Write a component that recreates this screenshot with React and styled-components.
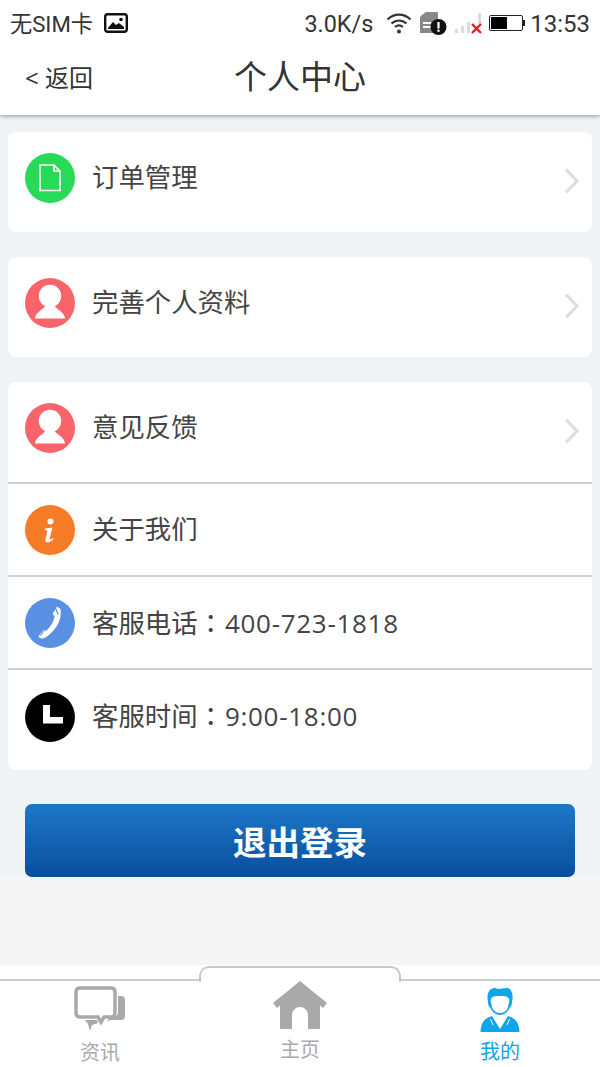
import React from 'react';
import styled, { createGlobalStyle } from 'styled-components';

const Global = createGlobalStyle`
  html, body { margin: 0; padding: 0; background: #f5f5f5; }
  * { box-sizing: border-box; }
  body { font-family: "Open Sans", "Noto Sans CJK SC", sans-serif; }
`;

const Page = styled.div`
  width: 600px;
  height: 1067px;
  display: flex;
  flex-direction: column;
  overflow: hidden;
  background: #f5f5f5;
`;

const Header = styled.header`
  height: 115px;
  background: #fff;
  box-shadow: 0 1px 4px rgba(0, 0, 0, 0.4);
  position: relative;
  z-index: 2;
  flex: none;
`;

const StatusBar = styled.div`
  height: 46px;
  padding: 0 10px;
  display: flex;
  align-items: center;
  color: #333;
  font-family: Roboto, "Noto Sans CJK SC", sans-serif;
  font-size: 24px;
`;

const StatusText = styled.span`
  line-height: 44px;
  padding-top: 2px;
  font-size: ${p => p.$size || 24}px;
  margin-left: ${p => p.$left || 0}px;
`;

const StatusIcon = styled.svg`
  flex: none;
  display: block;
  margin-left: ${p => p.$left || 0}px;
`;

const Spacer = styled.div`
  flex: 1;
`;

const NavBar = styled.div`
  height: 69px;
  display: grid;
  grid-template-columns: 1fr auto 1fr;
  align-items: center;
  padding: 0 25px 9px;
  color: #333;
`;

const Back = styled.span`
  font-size: 24px;
  line-height: 1;
  padding-top: 4px;
`;

const Title = styled.h1`
  margin: 0;
  font-size: 33px;
  font-weight: 400;
  line-height: 1;
`;

const Content = styled.main`
  height: 762px;
  flex: none;
  background: #eff3f5;
  padding: 17px 8px 0;
  display: flex;
  flex-direction: column;
  gap: 25px;
`;

const Card = styled.section`
  background: #fff;
  border-radius: 8px;
  display: flex;
  flex-direction: column;
  overflow: hidden;
`;

const Row = styled.div`
  height: ${p => p.$h}px;
  padding: ${p => p.$top}px 12px 0 17px;
  display: flex;
  align-items: flex-start;
  border-bottom: ${p => (p.$line ? '2px solid #d2d2d2' : 'none')};
`;

const Circle = styled.div`
  width: 50px;
  height: 50px;
  border-radius: 50%;
  background: ${p => p.$bg};
  display: flex;
  align-items: center;
  justify-content: center;
  flex: none;
`;

const Label = styled.span`
  margin-left: 17px;
  height: 50px;
  line-height: ${p => p.$lh || 48}px;
  font-size: 26.4px;
  color: #444;
  flex: 1;
  white-space: nowrap;
`;

const Colon = styled.span`
  font-family: "Noto Sans CJK TC", sans-serif;
`;

const Num = styled.span`
  font-size: 26px;
  letter-spacing: 0.7px;
  margin-left: 1px;
`;

const Chevron = styled.svg`
  flex: none;
  margin-top: 15px;
`;

const LogoutWrap = styled.div`
  padding: 9px 17px 0;
`;

const Logout = styled.button`
  width: 100%;
  height: 73px;
  border: none;
  border-radius: 7px;
  background: linear-gradient(#1d78c8, #0a4d9d);
  color: #fff;
  font-family: "Noto Sans CJK SC", sans-serif;
  font-size: 33.5px;
  font-weight: 700;
  display: block;
  padding: 0;
`;

const TabBar = styled.nav`
  margin-top: 88px;
  height: 102px;
  background: #fff;
  position: relative;
  flex: none;
  padding-top: 14px;
  display: grid;
  grid-template-columns: repeat(3, 1fr);
`;

const TabLine = styled.div`
  position: absolute;
  left: 0;
  right: 0;
  top: 14px;
  height: 2px;
  background: #cfcfc8;
`;

const TabBump = styled.div`
  position: absolute;
  left: 199px;
  top: 1px;
  width: 202px;
  height: 16px;
  background: #fff;
  border: 2px solid #c9c9c2;
  border-bottom: none;
  border-radius: 10px 10px 0 0;
`;

const Tab = styled.div`
  position: relative;
  display: flex;
  flex-direction: column;
  align-items: center;
  padding-top: ${p => p.$top}px;
  color: ${p => (p.$active ? '#0ea5ea' : '#a9a9a9')};
  font-size: 20px;
  line-height: 1;
`;

const TabText = styled.span`
  margin-top: ${p => p.$gap}px;
`;

const ChevronIcon = () => (
  <Chevron width="17" height="26" viewBox="0 0 17 26">
    <path d="M3 1.5 L14 13 L3 24.5" fill="none" stroke="#dedede" strokeWidth="3.2" />
  </Chevron>
);

const PersonIcon = () => (
  <svg width="50" height="50" viewBox="0 0 50 50">
    <circle cx="25" cy="18" r="11.2" fill="#fff" />
    <path d="M10 40.5 C10.5 34.5 16 33 20.5 28 L29.5 28 C34 33 39.5 34.5 40 40.5 Z" fill="#fff" />
  </svg>
);

export default function App() {
  return (
    <Page>
      <Global />
      <Header>
        <StatusBar>
          <StatusText $size={22.2}>无SIM卡</StatusText>
          <StatusIcon $left={11} width="24" height="20" viewBox="0 0 24 20">
            <rect x="1.2" y="1.2" width="21.6" height="17.6" rx="2.5" fill="none" stroke="#111" strokeWidth="2.4" />
            <path d="M4 15 L9 9 L12 12 L15 10 L20 14 L20 16 L4 16 Z" fill="#111" />
            <circle cx="17" cy="6.5" r="1.8" fill="#111" />
          </StatusIcon>
          <Spacer />
          <StatusText $size={23.4}>3.0K/s</StatusText>
          <StatusIcon $left={13} width="26" height="22" viewBox="0 0 26 22">
            <path d="M1.5 7.5 C8 1 18 1 24.5 7.5" fill="none" stroke="#333" strokeWidth="2.2" />
            <path d="M5.5 11.5 C10 7.5 16 7.5 20.5 11.5" fill="none" stroke="#333" strokeWidth="2.2" />
            <path d="M9 15 C11.5 13 14.5 13 17 15" fill="none" stroke="#333" strokeWidth="2.2" />
            <circle cx="13" cy="19.5" r="2" fill="#333" />
          </StatusIcon>
          <StatusIcon $left={7} width="28" height="24" viewBox="0 0 28 24">
            <path d="M1 7 Q1 5 3 4 L7 1 L18 1 Q19 1 19 3 L19 22 L1 22 Z" fill="#888" />
            <rect x="4" y="11" width="8" height="2" fill="#fff" />
            <rect x="4" y="15" width="8" height="2" fill="#fff" />
            <circle cx="19.5" cy="16" r="8" fill="#111" />
            <rect x="18.4" y="11" width="2.2" height="6.5" fill="#fff" />
            <rect x="18.4" y="18.6" width="2.2" height="2.2" fill="#fff" />
          </StatusIcon>
          <StatusIcon $left={7} width="28" height="22" viewBox="0 0 28 22">
            <rect x="1" y="17" width="3" height="4" fill="#ddd" />
            <rect x="7" y="14" width="3" height="7" fill="#ddd" />
            <rect x="13" y="10" width="3" height="11" fill="#ddd" />
            <rect x="24" y="1" width="3" height="11" fill="#ddd" />
            <path d="M18 12 L27 21 M27 12 L18 21" stroke="#f01818" strokeWidth="2.4" />
          </StatusIcon>
          <StatusIcon $left={7} width="36" height="16" viewBox="0 0 36 16">
            <rect x="0.5" y="0.5" width="33" height="15" rx="1.5" fill="#fff" stroke="#222" />
            <rect x="2" y="2" width="16" height="12" fill="#000" />
            <rect x="34" y="5" width="2" height="6" fill="#222" />
          </StatusIcon>
          <StatusText $left={5}>13:53</StatusText>
        </StatusBar>
        <NavBar>
          <Back>&lt; 返回</Back>
          <Title>个人中心</Title>
          <span />
        </NavBar>
      </Header>
      <Content>
        <Card>
          <Row $h={100} $top={21}>
            <Circle $bg="#29d958">
              <svg width="24" height="28" viewBox="0 0 24 28">
                <path d="M2 1 L16 1 L22 7 L22 26.5 L2 26.5 Z M16 1 L16 7 L22 7" fill="none" stroke="#fff" strokeWidth="1.6" />
              </svg>
            </Circle>
            <Label>订单管理</Label>
            <ChevronIcon />
          </Row>
        </Card>
        <Card>
          <Row $h={100} $top={21}>
            <Circle $bg="#f9646a"><PersonIcon /></Circle>
            <Label>完善个人资料</Label>
            <ChevronIcon />
          </Row>
        </Card>
        <Card>
          <Row $h={102} $top={21} $line>
            <Circle $bg="#f9646a"><PersonIcon /></Circle>
            <Label>意见反馈</Label>
            <ChevronIcon />
          </Row>
          <Row $h={93} $top={21} $line>
            <Circle $bg="#f57c25">
              <svg width="50" height="50" viewBox="0 0 50 50">
                <circle cx="25.5" cy="16.5" r="3" fill="#fff" />
                <path d="M20 23.5 L27.5 22.5 L24.8 33 Q24.6 35 26.2 34.2 L28 33 L28.6 34.2 Q25 37.6 22 37.2 Q19.8 36.8 20.6 33.4 L22.4 26.6 Q22.6 25 20 25 Z" fill="#fff" />
              </svg>
            </Circle>
            <Label>关于我们</Label>
          </Row>
          <Row $h={93} $top={21} $line>
            <Circle $bg="#5a90e4">
              <svg width="50" height="50" viewBox="0 0 50 50">
                <path d="M32 8.5 L35.5 11 C37 20 33 30 22 38.5 C18 41.5 14.5 40.5 13.5 38.5 L18.5 31.5 L21 33 C26 28.5 29 23 29.5 18 L27.5 16 Z" fill="#fff" />
                <path d="M30.5 10 L33 16.5 M19.5 31.5 L15.5 37.5" stroke="#5a90e4" strokeWidth="1.2" />
              </svg>
            </Circle>
            <Label>客服电话<Colon>：</Colon><Num>400-723-1818</Num></Label>
          </Row>
          <Row $h={100} $top={22}>
            <Circle $bg="#000">
              <svg width="50" height="50" viewBox="0 0 50 50">
                <path d="M18 13 L25 13 L25 25 L38 25 L38 31.5 L18 31.5 Z" fill="#fff" />
              </svg>
            </Circle>
            <Label $lh={46}>客服时间<Colon>：</Colon><Num>9:00-18:00</Num></Label>
          </Row>
        </Card>
        <LogoutWrap>
          <Logout>退出登录</Logout>
        </LogoutWrap>
      </Content>
      <TabBar>
        <TabLine />
        <TabBump />
        <Tab $top={7}>
          <svg width="52" height="48" viewBox="0 0 52 48">
            <path d="M6 2 L37 2 Q41 2 41 6 L41 27 Q41 31 37 31 L30 31 L27 36 L24 31 L6 31 Q2 31 2 27 L2 6 Q2 2 6 2 Z" fill="none" stroke="#a9a9a9" strokeWidth="3.5" />
            <path d="M44 10 L47 10 Q51 10 51 14 L51 30 Q51 34 47 34 L36 34 L33 36 L35 32 L40 31 Q44 30 44 26 Z" fill="#a9a9a9" />
            <path d="M11 34 L23 34 L24 37 L18 39 L16 45 L14 38 Z" fill="#a9a9a9" />
          </svg>
          <TabText $gap={9}>资讯</TabText>
        </Tab>
        <Tab $top={1}>
          <svg width="56" height="50" viewBox="0 0 56 50">
            <path d="M28 1 L55 23 L51 28 L48 25.5 L48 49 L36 49 L36 35 A8 8 0 0 0 20 35 L20 49 L8 49 L8 25.5 L5 28 L1 23 Z" fill="#a9a9a9" />
          </svg>
          <TabText $gap={10}>主页</TabText>
        </Tab>
        <Tab $top={8} $active>
          <svg width="40" height="46" viewBox="0 0 40 46">
            <path d="M8 15 C6 6 10 0.5 15 1 L18 2 L27 1 C31 1 34 7 32 15 C32 18 31 20 29.5 21 C28 25 24 28 20 28 C16 28 12 25 10.5 21 C9 20 8 18 8 15 Z" fill="#0ea5ea" />
            <path d="M10.5 13 C12 9 15 9 20 9 C25 9 28 9 29.5 13 L28 20 C27 24 23 26 20 26 C17 26 13 24 12 20 Z" fill="#fff" />
            <path d="M12 29 L20 42 L28 29 C35 31 39 35 39.5 45 L0.5 45 C1 35 5 31 12 29 Z" fill="#0ea5ea" />
            <path d="M10.5 32 L13 38 M29.5 32 L27 38" stroke="#fff" strokeWidth="1" fill="none" />
          </svg>
          <TabText $gap={9}>我的</TabText>
        </Tab>
      </TabBar>
    </Page>
  );
}
